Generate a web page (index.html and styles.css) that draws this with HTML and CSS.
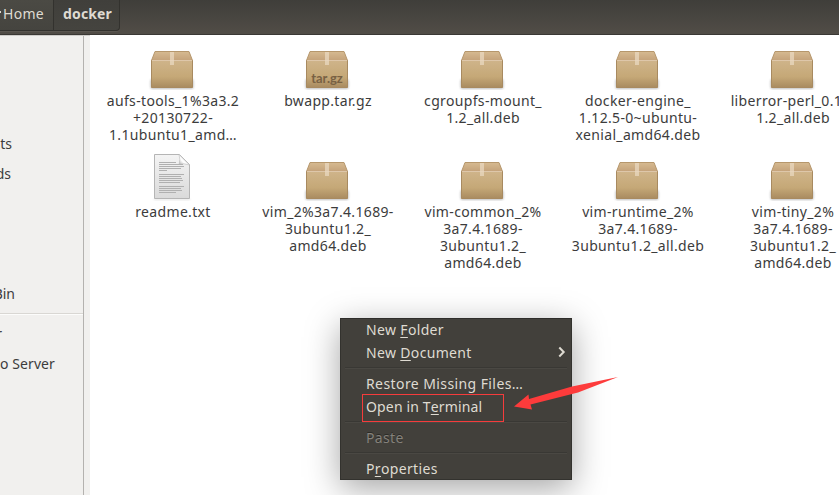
FILE: index.html
```html
<!DOCTYPE html>
<html lang="en">
<head>
<meta charset="utf-8">
<title>docker</title>
<link rel="stylesheet" href="styles.css">
</head>
<body>
<svg class="defs" width="0" height="0" aria-hidden="true">
  <defs>
    <linearGradient id="front" x1="0" y1="0" x2="0" y2="1"><stop offset="0" stop-color="#cfb48a"/><stop offset=".6" stop-color="#c5a877"/><stop offset="1" stop-color="#a98b60"/></linearGradient>
    <linearGradient id="lid" x1="0" y1="0" x2="0" y2="1"><stop offset="0" stop-color="#d6ba91"/><stop offset="1" stop-color="#c4a27a"/></linearGradient>
    <linearGradient id="sheet" x1="0" y1="0" x2="0" y2="1"><stop offset="0" stop-color="#f4f4f4"/><stop offset="1" stop-color="#dadada"/></linearGradient>
    <linearGradient id="fold" x1="0" y1="1" x2="1" y2="0"><stop offset="0" stop-color="#a8a8a8"/><stop offset=".35" stop-color="#fff"/><stop offset="1" stop-color="#ddd"/></linearGradient>
    <filter id="soft" x="-20%" y="-60%" width="140%" height="220%"><feGaussianBlur stdDeviation="1"/></filter>
    <symbol id="box" viewBox="0 0 48 48">
      <rect x="2.500" y="37" width="43" height="10" rx="2" fill="#555" opacity=".38" filter="url(#soft)"/>
      <path d="M7 9.500h34l3.500 9h-41z" fill="url(#lid)" stroke="#b6976c"/>
      <path d="M3.500 18.500h41v27h-41z" fill="url(#front)" stroke="#a88a60"/>
      <path d="M4 18.500h40" stroke="#dec7aa"/>
      <path d="M22 10h4v13h-4z" fill="#ead9c2" opacity=".72"/>
    </symbol>
    <symbol id="text" viewBox="0 0 48 48">
      <path d="M6 46h36v1h-36z" fill="#777" opacity=".3" filter="url(#soft)"/>
      <path d="M6.500 1.500h25l10 10v34h-35z" fill="url(#sheet)" stroke="#b5b5b5"/>
      <path d="M31 1.500q1.500 5 .2 9.500q5-.8 10.300 1z" fill="url(#fold)" stroke="#bbb" stroke-width=".6"/>
      <g stroke="#b0b0b0">
        <path d="M11 9.500h17M11 11.500h24M11 13.500h25M11 15.500h22M11 17.500h8"/>
        <path d="M11 21.500h25M11 23.500h22M11 25.500h23M11 27.500h24M11 29.500h21"/>
        <path d="M11 33.500h25M11 35.500h22M11 37.500h23M11 39.500h17"/>
      </g>
    </symbol>
  </defs>
</svg>
<div class="window">
  <header class="toolbar">
    <div class="crumb home"><i class="nub"></i>Home</div>
    <div class="crumb current">docker</div>
  </header>
  <div class="main">
    <nav class="sidebar">
      <div class="place docs">ts</div>
      <div class="place downloads">ds</div>
      <div class="place trash">Bin</div>
      <hr>
      <div class="place computer">r</div>
      <div class="place server">o Server</div>
    </nav>
    <main class="files">
      <div class="file"><svg><use href="#box"/></svg><p>aufs-tools_1%3a3.2<br>+20130722-<br>1.1ubuntu1_amd…</p></div>
      <div class="file"><svg viewBox="0 0 48 48"><use href="#box"/><text x="24" y="41" class="ext">tar.gz</text></svg><p>bwapp.tar.gz</p></div>
      <div class="file"><svg><use href="#box"/></svg><p>cgroupfs-mount_<br>1.2_all.deb</p></div>
      <div class="file"><svg><use href="#box"/></svg><p>docker-engine_<br>1.12.5-0~ubuntu-<br>xenial_amd64.deb</p></div>
      <div class="file"><svg><use href="#box"/></svg><p>liberror-perl_0.17-<br>1.2_all.deb</p></div>
      <div class="file"><svg><use href="#text"/></svg><p>readme.txt</p></div>
      <div class="file"><svg><use href="#box"/></svg><p>vim_2%3a7.4.1689-<br>3ubuntu1.2_<br>amd64.deb</p></div>
      <div class="file"><svg><use href="#box"/></svg><p>vim-common_2%<br>3a7.4.1689-<br>3ubuntu1.2_<br>amd64.deb</p></div>
      <div class="file"><svg><use href="#box"/></svg><p>vim-runtime_2%<br>3a7.4.1689-<br>3ubuntu1.2_all.deb</p></div>
      <div class="file"><svg><use href="#box"/></svg><p>vim-tiny_2%<br>3a7.4.1689-<br>3ubuntu1.2_<br>amd64.deb</p></div>
    </main>
  </div>
  <div class="menu">
    <div class="item">New <u>F</u>older</div>
    <div class="item">New <u>D</u>ocument<svg class="chevron" viewBox="0 0 8 12"><path d="M1.300 1.500L5.700 6L1.300 10.500"/></svg></div>
    <hr>
    <div class="item restore">Restore Missing Files…</div>
    <div class="item terminal">Open in T<u>e</u>rminal</div>
    <hr>
    <div class="item disabled">Paste</div>
    <hr>
    <div class="item">P<u>r</u>operties</div>
  </div>
  <div class="highlight"></div>
  <svg class="arrow" viewBox="0 0 106 36"><path d="M0 31.500L14.500 19.500L15 24L58 11.500L104 2L64 17.500L16.500 29.500L18 34.500Z"/></svg>
</div>
</body>
</html>
```

FILE: styles.css
```css
* { box-sizing: border-box; }
body { margin: 0; font-family: "Noto Sans", "Open Sans", sans-serif; font-size: 14px; color: #3c3c3c; }
.defs { position: absolute; }
.window { position: relative; width: 839px; height: 495px; overflow: hidden; display: flex; flex-direction: column; background: #fff; }
.toolbar { height: 35px; flex: none; display: flex; background: linear-gradient(#3f3e3a, #504c46 94%); border-bottom: 1px solid #3a3834; color: #dfdbd2; }
.crumb { height: 31px; line-height: 27px; background: linear-gradient(#4b4a44, #45443f); border-bottom: 1px solid #33322e; box-shadow: 0 1px #5a5650; }
.home { width: 54px; padding-left: 3px; display: flex; border-right: 1px solid #33322e; letter-spacing: .3px; position: relative; }
.nub { position: absolute; left: 0; top: 11px; width: 1px; height: 2px; background: #dfdbd2; }
.current { width: 66px; padding-left: 9px; font-weight: 700; border-right: 1px solid #33322e; border-radius: 0 0 4px 0; background: linear-gradient(#403f3b, #45443f); letter-spacing: .15px; }
.main { flex: 1; display: flex; min-height: 0; }
.sidebar { width: 90px; flex: none; padding-top: 93px; background: linear-gradient(90deg, #f1f0ee 83px, #b4b2af 83px 84px, #f1f0ee 84px); border-top: 1px solid #cfcdca; }
.place { height: 30px; line-height: 29px; display: flex; justify-content: flex-end; white-space: nowrap; }
.docs { width: 12px; }
.downloads { width: 11px; }
.trash { width: 15px; margin-top: 90px; }
.computer { width: 2px; }
.server { width: 55px; letter-spacing: .1px; }
.sidebar hr { width: 83px; height: 2px; margin: 4px 0; border: 0; border-top: 1px solid #d9d7d3; border-bottom: 1px solid #fcfcfb; }
.files { flex: none; width: 780px; padding: 7px 0 0 4px; display: grid; grid-template-columns: repeat(5, 155px); grid-template-rows: 111px 130px; }
.file { display: flex; flex-direction: column; align-items: center; padding-left: 1px; }
.file svg { width: 48px; height: 48px; flex: none; }
.file p { margin: 2px 0 0; padding-left: 2px; line-height: 17px; text-align: center; white-space: nowrap; letter-spacing: .34px; }
.ext { font: 700 13px Lato, sans-serif; fill: #786143; text-anchor: middle; }
.menu { position: absolute; left: 340px; top: 318px; width: 232px; height: 162px; padding-top: 1px; overflow: hidden; background: #42403b; border: 1px solid #33322e; border-top-color: #2e2d2a; color: #dfdbd2; box-shadow: 0 8px 32px rgba(0,0,0,.36); }
.item { height: 23px; padding: 0 4px 0 25px; line-height: 20px; display: flex; white-space: pre; letter-spacing: .34px; }
.restore { letter-spacing: .41px; }
.terminal { letter-spacing: .15px; }
.item u { text-decoration-thickness: 1px; text-underline-offset: 2px; }
.disabled { color: #85827b; text-shadow: 0 -1px #2b2a27; }
.menu hr { height: 2px; margin: 1px 4px 5px; border: 0; border-top: 1px solid #393834; border-bottom: 1px solid #4a4843; }
.chevron { width: 8px; height: 12px; margin: 3px 1px 0 auto; fill: none; stroke: #dfdbd2; stroke-width: 2; }
.highlight { position: absolute; left: 362px; top: 394px; width: 142px; height: 28px; border: 1px solid #f53c3c; }
.arrow { position: absolute; left: 514px; top: 375px; width: 106px; height: 36px; fill: #fd3b3b; }
```
